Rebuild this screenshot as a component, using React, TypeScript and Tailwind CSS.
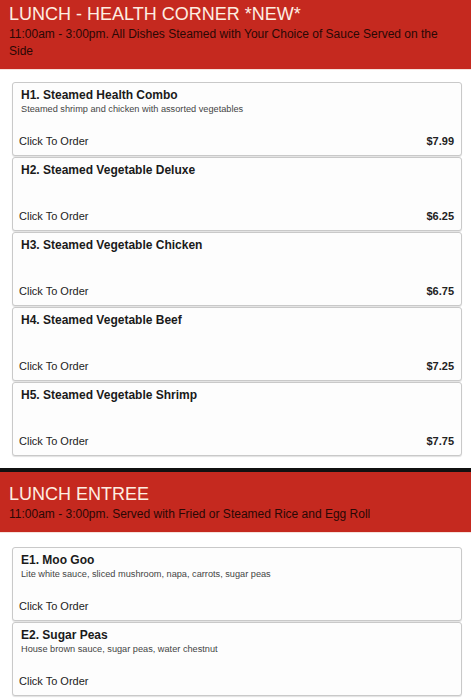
import React from "react";

type Item = { title: string; desc?: string; price?: string };

const health: Item[] = [
  { title: "H1. Steamed Health Combo", desc: "Steamed shrimp and chicken with assorted vegetables", price: "$7.99" },
  { title: "H2. Steamed Vegetable Deluxe", price: "$6.25" },
  { title: "H3. Steamed Vegetable Chicken", price: "$6.75" },
  { title: "H4. Steamed Vegetable Beef", price: "$7.25" },
  { title: "H5. Steamed Vegetable Shrimp", price: "$7.75" },
];

const entree: Item[] = [
  { title: "E1. Moo Goo", desc: "Lite white sauce, sliced mushroom, napa, carrots, sugar peas" },
  { title: "E2. Sugar Peas", desc: "House brown sauce, sugar peas, water chestnut" },
];

function Card({ item }: { item: Item }) {
  return (
    <div className="mb-[1px] flex h-[74px] flex-col rounded-[3px] border border-[#c9c9c9] bg-[#fdfdfd] pl-[6px] pr-[7px] pt-[5px] pb-[6px] shadow-[0_1px_1px_rgba(0,0,0,0.12)]">
      <div className="pl-[2px] text-[12px] font-bold leading-[15px] text-[#1a1a1a]">{item.title}</div>
      {item.desc && (
        <div className="pl-[2px] text-[9.2px] leading-[13px] text-[#444]">{item.desc}</div>
      )}
      <div className="mt-auto flex items-center justify-between text-[11px] leading-[16px] text-[#222]">
        <span>Click To Order</span>
        {item.price && <span className="font-bold">{item.price}</span>}
      </div>
    </div>
  );
}

function Header({ title, sub, first }: { title: string; sub: string; first?: boolean }) {
  return (
    <div
      className={
        "bg-[#c5291f] px-[9px] pb-[9px] " +
        (first ? "pt-[2px]" : "pt-[10px]")
      }
    >
      <div className="text-[18px] leading-[24px] text-[#fdeee2]">{title}</div>
      <div className="text-[12px] leading-[17px] text-[#2a0805]">{sub}</div>
    </div>
  );
}

export default function App() {
  return (
    <div className="w-[471px] bg-white" style={{ fontFamily: '"Liberation Sans", Arial, sans-serif' }}>
      <Header
        first
        title="LUNCH - HEALTH CORNER *NEW*"
        sub="11:00am - 3:00pm. All Dishes Steamed with Your Choice of Sauce Served on the Side"
      />
      <div className="h-[1px] bg-[#f6e2dc]" />
      <div className="pl-[12px] pr-[9px] pt-[12px] pb-[11px]">
        {health.map((it) => (
          <Card key={it.title} item={it} />
        ))}
      </div>
      <div className="h-[4px] bg-[#111]" />
      <Header title="LUNCH ENTREE" sub="11:00am - 3:00pm. Served with Fried or Steamed Rice and Egg Roll" />
      <div className="h-[1px] bg-[#f6e2dc]" />
      <div className="pl-[12px] pr-[9px] pt-[14px] pb-[11px]">
        {entree.map((it) => (
          <Card key={it.title} item={it} />
        ))}
      </div>
    </div>
  );
}
